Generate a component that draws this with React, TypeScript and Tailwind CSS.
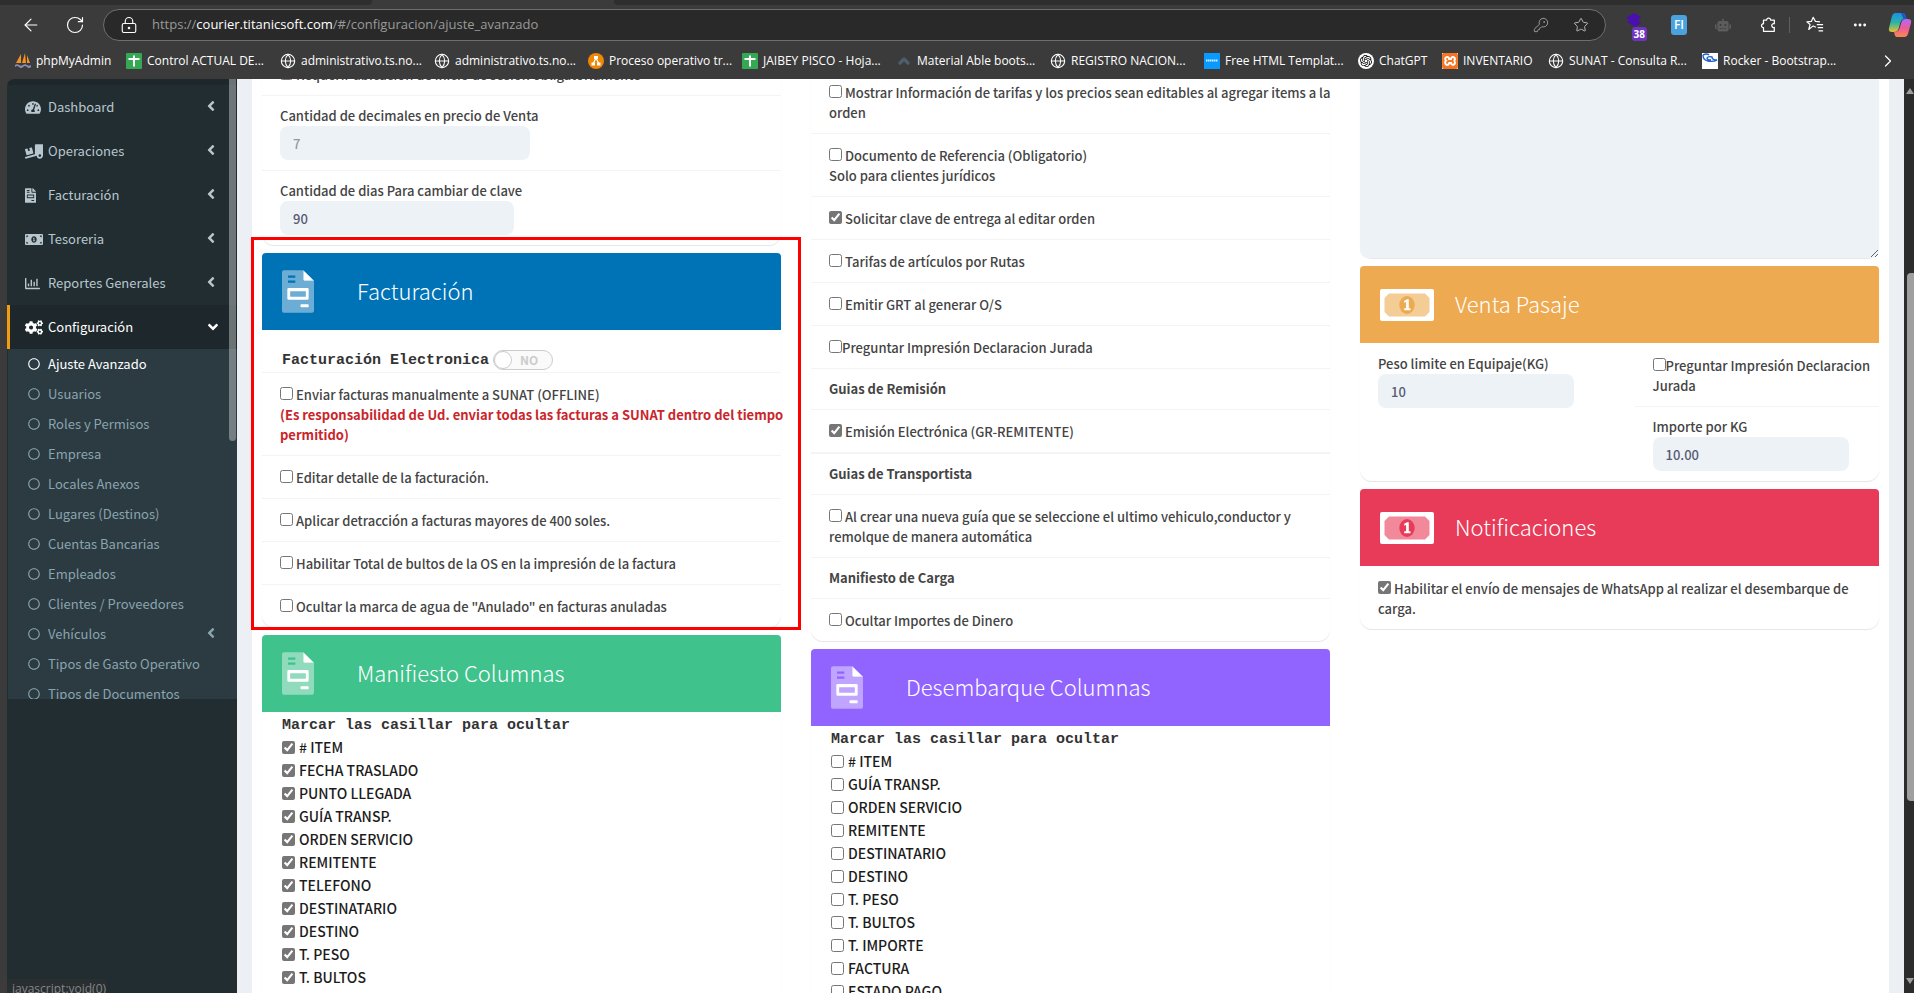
import { useId } from 'react';
import type { ReactNode } from 'react';
import {
  FaTachometerAlt,
  FaTruckLoading,
  FaFileInvoice,
  FaMoneyBillAlt,
  FaRegChartBar,
  FaCogs,
  FaAngleLeft,
  FaAngleDown,
  FaRegCircle,
  FaRobot,
} from 'react-icons/fa';
import { SiXampp, SiOpenai } from 'react-icons/si';
import { Globe, Star, ArrowLeft, RotateCw, ChevronRight, ChevronUp, KeyRound, LockKeyhole, Ellipsis } from 'lucide-react';

/* ---------- browser chrome ---------- */

function SheetIcon() {
  return (
    <svg viewBox="0 0 16 16" className="size-4">
      <rect width="16" height="16" rx="1" fill="#34a853" />
      <path d="M2.500 6h11M8 2.500v11" stroke="#fff" strokeWidth="2" />
    </svg>
  );
}

function SailIcon() {
  return (
    <svg viewBox="0 0 16 16" className="size-4">
      <path d="M6 1L1 10h5zM10 0L7 10h4zM12 2v8h3z" fill="#f39325" />
      <path d="M0 12q2-1.500 4 0t4 0 4 0 4 0v2q-2 2-4 0t-4 0-4 0-4 0z" fill="#8b8fc0" />
    </svg>
  );
}

function DiagramIcon() {
  return (
    <svg viewBox="0 0 16 16" className="size-4">
      <circle cx="8" cy="8" r="8" fill="#f08705" />
      <path d="M8 5L5 11M8 5l3 6" stroke="#fff" strokeWidth="1.200" />
      <path d="M6 3h4v3H6zM3.500 9.500h3.500v3H3.500zM9 9.500h3.500v3H9z" fill="#fff" />
    </svg>
  );
}

function BlueTileIcon() {
  return (
    <svg viewBox="0 0 16 16" className="size-4">
      <rect width="16" height="16" fill="#0a99ff" />
      <path d="M2 7.500h12" stroke="#d9efff" strokeWidth="2" strokeDasharray="1.500 .5" />
    </svg>
  );
}

function RockerIcon() {
  return (
    <svg viewBox="0 0 16 16" className="size-4">
      <rect width="16" height="16" fill="#fff" />
      <path d="M1 2q4-2 6 0M1 2q0 5 5 6 5 1 9-1-5 0-5-3-4-1-5 1 0 2 4 2" fill="none" stroke="#1e63c9" strokeWidth="1.400" />
    </svg>
  );
}

function CopilotIcon() {
  return (
    <svg viewBox="0 0 24 24" className="size-6 shrink-0">
      <defs>
        <linearGradient id="cp1" x1="0" y1="0" x2="0" y2="1">
          <stop offset="0" stopColor="#1a8fe8" />
          <stop offset=".5" stopColor="#2bb3a8" />
          <stop offset="1" stopColor="#e8c12b" />
        </linearGradient>
        <linearGradient id="cp2" x1="0" y1="0" x2="0" y2="1">
          <stop offset="0" stopColor="#b06af5" />
          <stop offset=".5" stopColor="#ee5a9c" />
          <stop offset="1" stopColor="#f98a4b" />
        </linearGradient>
      </defs>
      <path d="M7 0h8q2 0 3 4l.5 2h-3q-2 0-3 3l-2 7q-1 3-4 3H4q-4 0-3-4L4 3q1-3 3-3z" fill="url(#cp1)" />
      <path d="M17 24H9q-2 0-2.500-3L6 18.500h2.500q2 0 3-3l2-6.500q1-3 4-3H20q4 0 3 4l-3 11q-1 3-3 3z" fill="url(#cp2)" />
      <path d="M13 0h2q2 0 3 4l.5 2h-3z" fill="#1c56c9" />
    </svg>
  );
}

const globe = <Globe className="size-4" strokeWidth={1.6} />;

const bookmarks: { label: string; icon: ReactNode; width: string }[] = [
  { label: 'phpMyAdmin', icon: <SailIcon />, width: 'w-[111px]' },
  { label: 'Control ACTUAL DE...', icon: <SheetIcon />, width: 'w-[154px]' },
  { label: 'administrativo.ts.no...', icon: globe, width: 'w-[154px]' },
  { label: 'administrativo.ts.no...', icon: globe, width: 'w-[154px]' },
  { label: 'Proceso operativo tr...', icon: <DiagramIcon />, width: 'w-[154px]' },
  { label: 'JAIBEY PISCO - Hoja...', icon: <SheetIcon />, width: 'w-[154px]' },
  { label: 'Material Able boots...', icon: <ChevronUp className="size-4 text-[#4d5f6b]" strokeWidth={5} />, width: 'w-[154px]' },
  { label: 'REGISTRO NACION...', icon: globe, width: 'w-[154px]' },
  { label: 'Free HTML Templat...', icon: <BlueTileIcon />, width: 'w-[154px]' },
  {
    label: 'ChatGPT',
    icon: (
      <span className="flex size-4 items-center justify-center rounded-full bg-white">
        <SiOpenai className="size-3 text-black" />
      </span>
    ),
    width: 'w-[84px]',
  },
  {
    label: 'INVENTARIO',
    icon: (
      <span className="flex size-4 items-center justify-center bg-white">
        <SiXampp className="size-4 text-[#f37623]" />
      </span>
    ),
    width: 'w-[106px]',
  },
  { label: 'SUNAT - Consulta R...', icon: globe, width: 'w-[154px]' },
  { label: 'Rocker - Bootstrap...', icon: <RockerIcon />, width: 'w-[154px]' },
];

function BrowserChrome() {
  return (
    <header className="shrink-0 bg-[#3b3b3b] font-['Open_Sans',sans-serif] text-white">
      <div className="flex h-[5px]">
        <div className="w-[372px] rounded-br bg-[#2e2e2e]" />
        <div className="w-[242px]" />
        <div className="flex-1 rounded-bl bg-[#2e2e2e]" />
      </div>
      <div className="flex h-10 items-center pr-0.5 pl-[21px]">
        <button type="button" aria-label="Atrás" className="flex w-11 items-center">
          <ArrowLeft className="size-5" strokeWidth={1.4} />
        </button>
        <button type="button" aria-label="Actualizar" className="flex w-[38px] items-center">
          <RotateCw className="size-5" strokeWidth={1.4} />
        </button>
        <div className="flex h-8 flex-1 items-center rounded-full border border-[#6f6f6f] bg-[#292929] px-4">
          <LockKeyhole className="size-[18px]" strokeWidth={1.5} />
          <p className="ml-[14px] flex-1 text-[13px] whitespace-nowrap text-[#9a9a9a]">
            https://<span className="text-white">courier.titanicsoft.com</span>/#/configuracion/ajuste_avanzado
          </p>
          <button type="button" aria-label="Contraseñas" className="mr-6">
            <KeyRound className="size-4 text-[#9a9a9a]" strokeWidth={1.5} />
          </button>
          <button type="button" aria-label="Favorito">
            <Star className="size-4 text-[#b5b5b5]" strokeWidth={1.5} />
          </button>
        </div>
        <div className="flex shrink-0 items-center pl-5">
          <button type="button" aria-label="Extensión" className="relative mr-5 h-8 w-[25px] shrink-0">
            <svg viewBox="0 0 16 16" className="mb-2 size-4">
              <path d="M8 0l7 4-3 2.500 3 3.500-6 4-8-5 2.500-2L0 4.500z" fill="#4b0fae" />
            </svg>
            <span className="absolute right-1 bottom-0 rounded-[3px] bg-[#6f35be] px-0.5 text-[10px] leading-[14px] font-bold">38</span>
          </button>
          <span className="mr-7 flex h-5 w-4 items-center justify-center rounded-[3px] bg-[#4aa3df] text-xs font-semibold">FI</span>
          <FaRobot className="mr-7 size-4 text-[#5c5c5c]" />
          <svg viewBox="0 0 20 20" className="mr-3 size-[18px]" fill="none" stroke="#fff" strokeWidth="1.400" strokeLinejoin="round">
            <path d="M5 4.500h3.500a2.200 2.200 0 1 1 4.400 0H17V8.500a2.200 2.200 0 1 0 0 4.200V17H5v-4a2.200 2.200 0 1 1 0-4.400z" />
          </svg>
          <span className="mr-4 h-4 w-px bg-[#606060]" />
          <svg viewBox="0 0 20 20" className="mr-7 size-[18px]" fill="none" stroke="#fff" strokeWidth="1.300" strokeLinejoin="round">
            <path d="M11 12.500L8 11l-5 4 1.500-5.500L1 6.500l5-.5 2-4.500L10.500 6l5 .5" />
            <path d="M12 9.500h7M13 13h6M14 16.500h5" />
          </svg>
          <Ellipsis className="mr-5 size-4" strokeWidth={2.4} />
          <CopilotIcon />
        </div>
      </div>
      <nav className="flex h-[34px] items-center pb-0.5 pl-[15px] text-xs">
        {bookmarks.map((b, i) => (
          <a key={i} href="#" className={`flex shrink-0 items-center gap-[5px] whitespace-nowrap ${b.width}`}>
            <span className="shrink-0">{b.icon}</span>
            {b.label}
          </a>
        ))}
        <ChevronRight className="ml-[22px] size-5" strokeWidth={1.5} />
      </nav>
    </header>
  );
}

/* ---------- sidebar ---------- */

const menu = [
  { label: 'Dashboard', icon: <FaTachometerAlt className="h-[15px] w-4" /> },
  { label: 'Operaciones', icon: <FaTruckLoading className="h-[15px] w-[18px]" /> },
  { label: 'Facturación', icon: <FaFileInvoice className="h-[15px] w-[11px]" /> },
  { label: 'Tesoreria', icon: <FaMoneyBillAlt className="h-[15px] w-[18px]" /> },
  { label: 'Reportes Generales', icon: <FaRegChartBar className="h-[15px] w-[15px]" /> },
];

const submenu = [
  'Ajuste Avanzado',
  'Usuarios',
  'Roles y Permisos',
  'Empresa',
  'Locales Anexos',
  'Lugares (Destinos)',
  'Cuentas Bancarias',
  'Empleados',
  'Clientes / Proveedores',
  'Vehículos',
  'Tipos de Gasto Operativo',
  'Tipos de Documentos',
];

function Sidebar() {
  return (
    <aside className="relative w-[230px] shrink-0 overflow-hidden rounded-tl-lg bg-[#222d32] text-[13px]">
      <div className="h-1.5 bg-[#1e282c]" />
      <nav className="text-[#b8c7ce]">
        {menu.map(({ label, icon }) => (
          <a key={label} href="#" className="flex h-11 items-center pr-[18px] pl-[18px]">
            <span className="flex w-[23px]">{icon}</span>
            {label}
            <FaAngleLeft className="mb-0.5 ml-auto size-4" />
          </a>
        ))}
        <a href="#" className="flex h-11 items-center border-l-3 border-[#f39c12] bg-[#1e282c] pr-4 pl-[15px] text-white">
          <span className="flex w-[23px]">
            <FaCogs className="h-[15px] w-[18px]" />
          </span>
          Configuración
          <FaAngleDown className="ml-auto size-4" />
        </a>
        <div className="ml-px h-[350px] overflow-hidden bg-[#2c3b41] text-[#8aa4af]">
          {submenu.map((label, i) => (
            <a key={label} href="#" className={`flex h-[30px] items-center gap-2 pr-[18px] pl-5 ${i === 0 ? 'text-white' : ''}`}>
              <FaRegCircle className="size-3" />
              {label}
              {label === 'Vehículos' && <FaAngleLeft className="mb-0.5 ml-auto size-4" />}
            </a>
          ))}
        </div>
      </nav>
      <div className="absolute top-0 right-px h-[362px] w-[7px] rounded-b bg-white/35" />
      <p className="absolute bottom-[-4px] left-0 w-[100px] rounded-tr bg-[#292e31] pt-0.5 pl-[5px] font-['Open_Sans',sans-serif] text-xs text-[#85878a]">
        javascript:void(0)
      </p>
    </aside>
  );
}

/* ---------- settings building blocks ---------- */

function InvoiceIcon() {
  return (
    <svg viewBox="0 0 384 512" className="h-[43px] w-8" fill="#fff">
      <path
        fillOpacity=".42"
        fillRule="evenodd"
        d="M24 0H256V112a16 16 0 0 0 16 16H384V488a24 24 0 0 1-24 24H24a24 24 0 0 1-24-24V24A24 24 0 0 1 24 0zM72 64v28h88V64zM72 124v28h88v-28z"
      />
      <path d="M256 0L384 128H272a16 16 0 0 1-16-16z" />
      <path fillRule="evenodd" d="M80 214H304a16 16 0 0 1 16 16V340a16 16 0 0 1-16 16H80a16 16 0 0 1-16-16V230a16 16 0 0 1 16-16zM98 252V318H286V252z" />
      <rect x="222" y="410" width="98" height="34" rx="8" />
    </svg>
  );
}

function BillIcon({ accent }: { accent: string }) {
  return (
    <svg viewBox="0 0 54 32" className="h-8 w-[54px]">
      <rect width="54" height="32" rx="2" fill="#fff" />
      <path d="M9 4.500H45L49.500 9V23L45 27.500H9L4.500 23V9z" fill={accent} fillOpacity=".6" />
      <ellipse cx="27" cy="16" rx="7.700" ry="9" fill={accent} />
      <path d="M24.200 11.800L27 10.300h1.800v9h1.700v2h-6.300v-2h1.900v-6.300l-1.900.8z" fill="#fff" />
    </svg>
  );
}

function CardHeader({ title, color, icon }: { title: string; color: string; icon: ReactNode }) {
  return (
    <div className={`flex h-[77px] items-center rounded-t px-5 text-white ${color}`}>
      <span className="mr-[21px] w-[54px]">{icon}</span>
      <h2 className="pb-1 text-[22px] font-light">{title}</h2>
    </div>
  );
}

function Card({ children }: { children: ReactNode }) {
  return <section className="relative mb-2 rounded-t rounded-b-xl bg-white shadow-[0_1px_1px_rgba(0,0,0,0.1)]">{children}</section>;
}

function Check({ checked = false, tight = false, children }: { checked?: boolean; tight?: boolean; children: ReactNode }) {
  return (
    <div className="pt-3 pb-[10px] pl-[18px]">
      <label>
        <input
          type="checkbox"
          defaultChecked={checked}
          className={`size-[13px] align-baseline accent-[#767676] ${tight ? '' : 'mr-[3px]'}`}
        />
        {children}
      </label>
    </div>
  );
}

function Heading({ children }: { children: ReactNode }) {
  return <h3 className="px-[18px] py-[10px] font-bold">{children}</h3>;
}

function Field({ label, value, width, muted = false }: { label: string; value: string; width: string; muted?: boolean }) {
  const id = useId();
  return (
    <div className="px-[18px] py-[10px]">
      <label htmlFor={id} className="block">
        {label}
      </label>
      <input
        id={id}
        defaultValue={value}
        className={`block h-[34px] rounded-lg bg-[#edf2f7] px-[13px] font-medium ${width} ${muted ? 'text-[#999]' : 'text-[#5a5a72]'}`}
      />
    </div>
  );
}

function ColumnList({ items, checked = false }: { items: string[]; checked?: boolean }) {
  return (
    <div className="px-5 pt-px text-sm leading-[23px] text-[#1c1c1c]">
      <h3 className="h-[23px] pt-px font-['Liberation_Mono',monospace] text-[15px] font-bold text-[#333]">Marcar las casillar para ocultar</h3>
      {items.map((item) => (
        <label key={item} className="flex h-[23px] items-center gap-1">
          <input type="checkbox" defaultChecked={checked} className="size-[13px] accent-[#767676]" />
          {item}
        </label>
      ))}
    </div>
  );
}

const manifest = [
  '# ITEM',
  'FECHA TRASLADO',
  'PUNTO LLEGADA',
  'GUÍA TRANSP.',
  'ORDEN SERVICIO',
  'REMITENTE',
  'TELEFONO',
  'DESTINATARIO',
  'DESTINO',
  'T. PESO',
  'T. BULTOS',
  'T. IMPORTE',
];

const unloading = [
  '# ITEM',
  'GUÍA TRANSP.',
  'ORDEN SERVICIO',
  'REMITENTE',
  'DESTINATARIO',
  'DESTINO',
  'T. PESO',
  'T. BULTOS',
  'T. IMPORTE',
  'FACTURA',
  'ESTADO PAGO',
];

/* ---------- page ---------- */

export default function App() {
  return (
    <div className="flex h-screen flex-col overflow-hidden bg-[#3b3b3b]">
      <BrowserChrome />
      <div className="flex min-h-0 flex-1 pl-[7px] font-['Noto_Sans_CJK_SC',sans-serif]">
        <Sidebar />
        <main className="min-w-0 flex-1 overflow-hidden bg-[#ecf0f5] px-[15px]">
          <div className="grid h-full grid-cols-3 gap-[30px] bg-white px-[10px] text-[13px] leading-5 font-medium text-[#444]">
            <div className="-mt-[26px]">
              <Card>
                <div className="divide-y divide-[#f4f4f4]">
                  <Check>Requerir ubicación de inicio de sesión obligatoriamente</Check>
                  <Field label="Cantidad de decimales en precio de Venta" value="7" width="w-[250px]" muted />
                  <Field label="Cantidad de dias Para cambiar de clave" value="90" width="w-[234px]" />
                </div>
              </Card>
              <Card>
                <CardHeader title="Facturación" color="bg-[#0073b7]" icon={<InvoiceIcon />} />
                <div className="divide-y divide-[#f4f4f4]">
                  <div className="flex h-[43px] items-end gap-1 px-5 pb-0.5">
                    <span className="font-['Liberation_Mono',monospace] text-[15px] leading-[18px] font-bold text-[#333]">
                      Facturación Electronica
                    </span>
                    <button
                      type="button"
                      role="switch"
                      aria-checked="false"
                      aria-label="Facturación Electronica"
                      className="flex h-5 w-[60px] items-center rounded-full border border-[#ccc] bg-[#fafafa] text-xs font-bold text-[#ccc]"
                    >
                      <span className="mr-2 size-[18px] rounded-full border border-[#ccc] bg-white" />
                      NO
                    </button>
                  </div>
                  <Check>
                    Enviar facturas manualmente a SUNAT (OFFLINE)
                    <strong className="block font-bold whitespace-nowrap text-[#c9252b]">
                      (Es responsabilidad de Ud. enviar todas las facturas a SUNAT dentro del tiempo
                      <br />
                      permitido)
                    </strong>
                  </Check>
                  <Check>Editar detalle de la facturación.</Check>
                  <Check>Aplicar detracción a facturas mayores de 400 soles.</Check>
                  <Check>Habilitar Total de bultos de la OS en la impresión de la factura</Check>
                  <Check>Ocultar la marca de agua de "Anulado" en facturas anuladas</Check>
                </div>
                <div className="pointer-events-none absolute -top-4 -right-5 -bottom-[3px] -left-[11px] border-3 border-[#ff0000]" />
              </Card>
              <Card>
                <CardHeader title="Manifiesto Columnas" color="bg-[#3fc28c]" icon={<InvoiceIcon />} />
                <ColumnList items={manifest} checked />
              </Card>
            </div>

            <div className="-mt-2">
              <Card>
                <div className="divide-y divide-[#f4f4f4]">
                  <div className="whitespace-nowrap">
                    <Check>
                      Mostrar Información de tarifas y los precios sean editables al agregar items a la
                      <br />
                      orden
                    </Check>
                  </div>
                  <Check>
                    Documento de Referencia (Obligatorio)
                    <br />
                    Solo para clientes jurídicos
                  </Check>
                  <Check checked>Solicitar clave de entrega al editar orden</Check>
                  <Check>Tarifas de artículos por Rutas</Check>
                  <Check>Emitir GRT al generar O/S</Check>
                  <Check tight>Preguntar Impresión Declaracion Jurada</Check>
                  <Heading>Guias de Remisión</Heading>
                  <Check checked>Emisión Electrónica (GR-REMITENTE)</Check>
                  <div className="border-t border-[#f4f4f4]">
                    <Heading>Guias de Transportista</Heading>
                  </div>
                  <Check>Al crear una nueva guía que se seleccione el ultimo vehiculo,conductor y remolque de manera automática</Check>
                  <Heading>Manifiesto de Carga</Heading>
                  <Check>Ocultar Importes de Dinero</Check>
                </div>
              </Card>
              <Card>
                <CardHeader title="Desembarque Columnas" color="bg-[#9164ff]" icon={<InvoiceIcon />} />
                <ColumnList items={unloading} />
              </Card>
            </div>

            <div>
              <Card>
                <textarea aria-label="Observaciones" className="block h-[179px] w-full rounded-b-lg bg-[#edf2f7] p-3" />
              </Card>
              <Card>
                <CardHeader title="Venta Pasaje" color="bg-[#edaa50]" icon={<BillIcon accent="#edaa50" />} />
                <div className="grid grid-cols-2 gap-[30px] pt-px">
                  <Field label="Peso limite en Equipaje(KG)" value="10" width="w-[196px]" />
                  <div className="divide-y divide-[#f4f4f4]">
                    <Check tight>Preguntar Impresión Declaracion Jurada</Check>
                    <Field label="Importe por KG" value="10.00" width="w-[196px]" />
                  </div>
                </div>
              </Card>
              <Card>
                <CardHeader title="Notificaciones" color="bg-[#e73b59]" icon={<BillIcon accent="#e73b59" />} />
                <div className="pt-px">
                  <Check checked>
                    Habilitar el envío de mensajes de WhatsApp al realizar el desembarque de
                    <br />
                    carga.
                  </Check>
                </div>
              </Card>
            </div>
          </div>
        </main>
        <div className="flex w-[10px] shrink-0 flex-col items-end justify-between bg-[#2c2c2c] py-2">
          <svg viewBox="0 0 8 8" className="size-2">
            <path d="M4 1l4 6H0z" fill="#9f9f9f" />
          </svg>
          <div className="mt-[178px] mb-auto h-[528px] w-[7px] rounded-l bg-[#9f9f9f]" />
          <svg viewBox="0 0 8 8" className="size-2">
            <path d="M4 7l4-6H0z" fill="#9f9f9f" />
          </svg>
        </div>
      </div>
    </div>
  );
}
